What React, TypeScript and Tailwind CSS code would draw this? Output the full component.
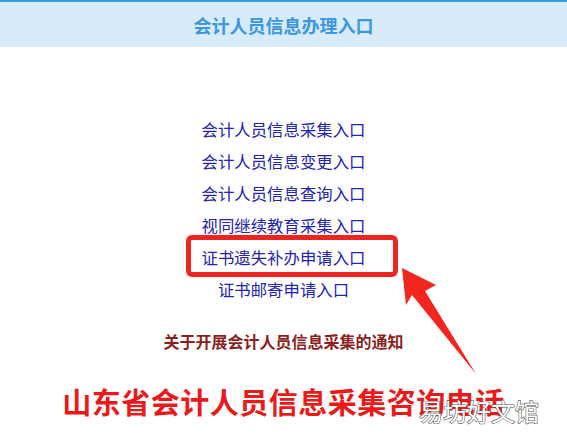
const links = [
  "会计人员信息采集入口",
  "会计人员信息变更入口",
  "会计人员信息查询入口",
  "视同继续教育采集入口",
  "证书遗失补办申请入口",
  "证书邮寄申请入口",
];

export default function App() {
  return (
    <div
      className="relative h-[445px] w-full overflow-hidden bg-white"
      style={{ fontFamily: "'Noto Sans CJK SC', 'Noto Sans', sans-serif" }}
    >
      {/* Header */}
      <div className="flex h-[47px] items-center justify-center border-t-2 border-[#3b9be0] bg-[#d7ebfb]">
        <h1 className="text-[18px] font-bold leading-none text-[#3a97e0]">会计人员信息办理入口</h1>
      </div>

      {/* Entry links */}
      <div className="flex flex-col items-center pt-[66px]">
        {links.map((text, i) => (
          <a key={text} href="#" className="relative text-[16.4px] leading-[32px] text-[#2424ad]">
            {text}
            {i === 4 && (
              <span className="pointer-events-none absolute -bottom-[4px] -left-[16px] -right-[33px] -top-[6px] rounded-md border-[5px] border-[#ee2420]" />
            )}
          </a>
        ))}

        <p className="mt-[24px] text-[16px] font-bold leading-[24px] text-[#8c1f1f]">
          关于开展会计人员信息采集的通知
        </p>

        <p className="mt-[30px] text-[29px] font-bold leading-[36px] tracking-[0.5px] text-[#e81a1a]">
          山东省会计人员信息采集咨询电话
        </p>
      </div>

      {/* Arrow annotation */}
      <svg className="pointer-events-none absolute left-0 top-0" width="567" height="445" viewBox="0 0 567 445">
        <polygon
          points="402,268 436,285 425,291 476,374 412,295 406,305"
          fill="#f3261f"
        />
      </svg>

      {/* Watermark */}
      <span className="absolute left-[419px] top-[399px] text-[24px] leading-none text-white [-webkit-text-stroke:1.2px_#555] [paint-order:stroke_fill]">
        易坊好文馆
      </span>
    </div>
  );
}
